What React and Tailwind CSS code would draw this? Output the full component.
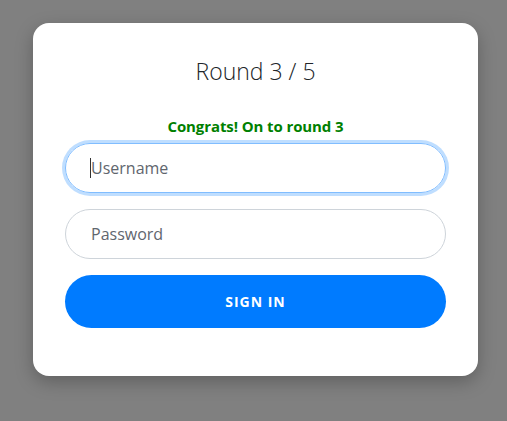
import React from "react";

const App = () => {
  return (
    <div className="min-h-screen bg-[#808080] pl-[33px] pt-[23px] font-['Open_Sans',sans-serif]">
      <div className="w-[445px] h-[353px] bg-white rounded-[16px] shadow-[0_6px_18px_rgba(0,0,0,0.25)] px-8 pt-8">
        <h1 className="text-center text-[23px] leading-[32px] font-light text-[#212529]">
          Round 3 / 5
        </h1>
        <p className="mt-[29px] text-center text-[15px] leading-[20px] font-bold text-[#008000] tracking-[-0.1px]">
          Congrats! On to round 3
        </p>
        <form className="mt-[7px] flex flex-col gap-4" onSubmit={(e) => e.preventDefault()}>
          <div className="relative">
            <input
              type="text"
              placeholder="Username"
              className="w-full h-[50px] rounded-full border border-[#80bdff] shadow-[0_0_0_3px_rgba(0,123,255,0.25)] pl-[25px] pr-6 text-[16px] text-[#495057] placeholder:text-[#5f666e] outline-none"
            />
            <span className="absolute left-[25px] top-[15px] w-px h-[20px] bg-[#333]" />
          </div>
          <input
            type="password"
            placeholder="Password"
            className="w-full h-[50px] rounded-full border border-[#ced4da] pl-[25px] pr-6 text-[16px] text-[#495057] placeholder:text-[#5f666e] outline-none"
          />
          <button
            type="submit"
            className="w-full h-[53px] rounded-full bg-[#007bff] text-white text-[14px] font-bold tracking-[1px] uppercase"
          >
            Sign in
          </button>
        </form>
      </div>
    </div>
  );
};

export default App;
